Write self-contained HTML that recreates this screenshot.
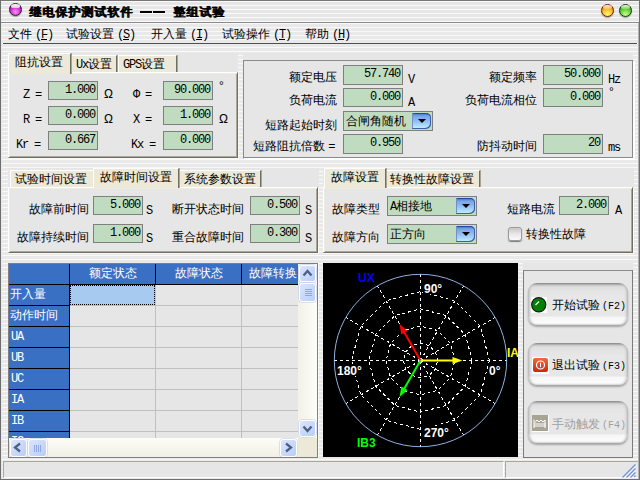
<!DOCTYPE html>
<html><head><meta charset="utf-8">
<style>
*{margin:0;padding:0;box-sizing:border-box}
html,body{width:640px;height:480px;overflow:hidden}
body{position:relative;font-family:"Liberation Sans",sans-serif;font-size:12px;color:#000;
background:repeating-linear-gradient(to bottom,#e9e9e9 0 3px,#f9f9f9 3px 4px);}
.a{position:absolute;white-space:nowrap}
.t{position:absolute;white-space:nowrap;line-height:12px;font-size:12px}
.m{font-family:"Liberation Mono",monospace;letter-spacing:-1.2px}
.inp{position:absolute;background:#c0dcc0;border:1px solid #7f7f7f;text-align:right;padding-right:2px;
 font-family:"Liberation Mono",monospace;letter-spacing:-1.2px;font-size:12px;line-height:17px}
.panel{position:absolute;background:#e6e6e6;border-top:1px solid #fff;border-left:1px solid #fff;border-right:1px solid #716f64;border-bottom:1px solid #716f64;box-shadow:inset 1px 1px 0 #eeecdf,inset -1px -1px 0 #aca899,1px 1px 0 #f8f8f8}
.tab{position:absolute;background:#ece9d8;border-top:1px solid #fff;border-left:1px solid #fff;border-right:1px solid #716f64;box-shadow:1px 0 0 #a9a595}
.tabs{position:absolute;background:#e6e6e6}
.grp{position:absolute;background:#e6e6e6;border:1px solid #8a8a8a;border-right-color:#fff;border-bottom-color:#fff;box-shadow:inset -1px -1px 0 #8a8a8a, 1px 1px 0 #fff}
.sb{position:absolute;border:1px solid #fff;border-radius:3px;background:linear-gradient(to bottom right,#dbe6fd,#b9cdf8);box-shadow:0 0 0 0.5px #b8c8e8}
.arr{position:absolute;left:50%;top:50%;width:6px;height:6px;border:2px solid #4d6185;border-width:2px 2px 0 0}
.arr.up{transform:translate(-50%,-25%) rotate(-45deg)}
.arr.dn{transform:translate(-50%,-75%) rotate(135deg)}
.arr.lf{transform:translate(-25%,-50%) rotate(-135deg)}
.arr.rt{transform:translate(-75%,-50%) rotate(45deg)}
.grip.v{position:absolute;left:5px;top:5px;width:7px;height:8px;background:repeating-linear-gradient(to bottom,#8fa8e0 0 1px,transparent 1px 2px)}
.grip.h{position:absolute;left:5px;top:5px;width:8px;height:7px;background:repeating-linear-gradient(to right,#8fa8e0 0 1px,transparent 1px 2px)}
.btn{position:absolute;border-radius:9px;background:linear-gradient(to bottom,#8a8a8a 0,#9a9a9a 1px,#c4c4c4 2px,#dedede 4px,#e6e6e6 9px,#e4e4e4 11px,#e7e7e7 12px,#e7e7e7 33px,#f6f6f6 34px,#fbfbfb 40px,#d8d8d8 42px);box-shadow:inset 3px 0 3px -2px #a8a8a8,inset -3px 0 3px -2px #a8a8a8,0 2px 2px #a4a4a4}
.cb{position:absolute;width:19px;height:16px;border-radius:1px 5px 5px 1px;background:linear-gradient(to bottom,#3d6cc0 0,#7aa6e8 20%,#8ab8f0 45%,#b0dcff 80%,#c8f0ff 100%);box-shadow:inset -1px -1px 0 #3a5fa8, inset 1px 0 0 #7090c8, inset 0 1px 0 #204a9a}
.cb:after{content:"";position:absolute;left:6px;top:6px;border-left:4px solid transparent;border-right:4px solid transparent;border-top:4px solid #000}
.u{font-family:"Liberation Mono",monospace;font-size:10px;letter-spacing:0}
</style></head><body>
<!-- window frame -->
<div class="a" style="left:0;top:0;width:1px;height:480px;background:#6e6e6e"></div>
<div class="a" style="left:639px;top:0;width:1px;height:480px;background:#6e6e6e"></div>
<div class="a" style="left:638px;top:0;width:1px;height:480px;background:#b4b4b4"></div>
<div class="a" style="left:0;top:479px;width:640px;height:1px;background:#6e6e6e"></div>
<div class="a" style="left:1px;top:0;width:1px;height:479px;background:#e8e8e8"></div>

<!-- title bar -->
<div class="a" style="left:0;top:0;width:640px;height:23px;border-top:1px solid #777;border-bottom:1px solid #8a8a8a;
 background:repeating-linear-gradient(to bottom,#fafafa 0 1px,#e6e6e6 1px 4px);"></div>
<div class="a" style="left:0;top:0;width:1px;height:23px;background:#6e6e6e"></div>
<div class="a" style="left:639px;top:0;width:1px;height:23px;background:#6e6e6e"></div>
<div class="a" style="left:9px;top:3px;width:13px;height:13px;border-radius:50%;background:radial-gradient(circle at 50% 72%,#f890f8 0,#d030d0 50%,#800080 85%);border:1px solid #222;box-shadow:0 1px 1px rgba(0,0,0,.3)"></div>
<div class="a" style="left:11px;top:4px;width:9px;height:4px;border-radius:50% 50% 40% 40%;background:linear-gradient(#fff,#e0c0e0)"></div>
<div class="t" style="left:29px;top:6px;font-weight:bold;letter-spacing:1px;text-shadow:0.6px 0 0 #000">继电保护测试软件</div>
<div class="a" style="left:140px;top:11px;width:12px;height:2px;background:#000"></div>
<div class="a" style="left:153px;top:11px;width:12px;height:2px;background:#000"></div>
<div class="t" style="left:173px;top:6px;font-weight:bold;letter-spacing:1px;text-shadow:0.6px 0 0 #000">整组试验</div>
<div class="a" style="left:601px;top:4px;width:13px;height:13px;border-radius:50%;background:radial-gradient(circle at 50% 85%,#ffff70 0,#f8c030 45%,#e07800 80%,#a03000 100%);border:1px solid #702000;box-shadow:0 1px 1px rgba(0,0,0,.35)"></div>
<div class="a" style="left:603px;top:5px;width:9px;height:4px;border-radius:50% 50% 40% 40%;background:linear-gradient(rgba(255,255,255,.95),rgba(255,230,200,.3))"></div>
<div class="a" style="left:619px;top:4px;width:13px;height:13px;border-radius:50%;background:radial-gradient(circle at 50% 85%,#c8ff90 0,#70d040 45%,#30a010 80%,#105000 100%);border:1px solid #0c3a0c;box-shadow:0 1px 1px rgba(0,0,0,.35)"></div>
<div class="a" style="left:621px;top:5px;width:9px;height:4px;border-radius:50% 50% 40% 40%;background:linear-gradient(rgba(255,255,255,.95),rgba(220,255,200,.3))"></div>

<!-- menu -->
<div class="a" style="left:3px;top:43px;width:634px;height:1px;background:#505050"></div>
<div class="t" style="left:8px;top:28px">文件<span class="m" style="margin-left:3px">(<u>F</u>)</span></div>
<div class="t" style="left:66px;top:28px">试验设置<span class="m" style="margin-left:3px">(<u>S</u>)</span></div>
<div class="t" style="left:151px;top:28px">开入量<span class="m" style="margin-left:3px">(<u>I</u>)</span></div>
<div class="t" style="left:222px;top:28px">试验操作<span class="m" style="margin-left:3px">(<u>T</u>)</span></div>
<div class="t" style="left:305px;top:28px">帮助<span class="m" style="margin-left:3px">(<u>H</u>)</span></div>


<!-- ===== tab control 1 (阻抗设置) ===== -->
<div class="tabs" style="left:8px;top:53px;width:230px;height:20px"></div>
<div class="panel" style="left:8px;top:72px;width:230px;height:86px"></div>
<div class="tab" style="left:8px;top:53px;width:63px;height:21px;border-bottom:none"></div>
<div class="tab" style="left:72px;top:55px;width:45px;height:17px;border-left:none"></div>
<div class="tab" style="left:118px;top:55px;width:59px;height:17px;border-left:1px solid #fff"></div>
<div class="t" style="left:15px;top:56px">阻抗设置</div>
<div class="t" style="left:76px;top:58px"><span class="m">Ux</span>设置</div>
<div class="t" style="left:123px;top:58px"><span class="m">GPS</span>设置</div>
<div class="t m" style="left:23px;top:89px">Z =</div>
<div class="t m" style="left:23px;top:114px">R =</div>
<div class="t m" style="left:16px;top:139px">Kr =</div>
<div class="inp" style="left:48px;top:81px;width:50px;height:19px">1.000</div>
<div class="inp" style="left:48px;top:106px;width:50px;height:19px">0.000</div>
<div class="inp" style="left:48px;top:131px;width:50px;height:19px">0.667</div>
<div class="t" style="left:104px;top:88px">Ω</div>
<div class="t" style="left:104px;top:113px">Ω</div>
<div class="t m" style="left:133px;top:89px">Φ =</div>
<div class="t m" style="left:133px;top:114px">X =</div>
<div class="t m" style="left:131px;top:139px">Kx =</div>
<div class="inp" style="left:163px;top:81px;width:50px;height:19px">90.000</div>
<div class="inp" style="left:163px;top:106px;width:50px;height:19px">1.000</div>
<div class="inp" style="left:163px;top:131px;width:50px;height:19px">0.000</div>
<div class="t" style="left:219px;top:80px">°</div>
<div class="t" style="left:219px;top:113px">Ω</div>

<!-- ===== group box right top ===== -->
<div class="a" style="left:243px;top:53px;width:390px;height:105px;background:#e6e6e6"></div>
<div class="grp" style="left:243px;top:60px;width:391px;height:99px"></div>
<div class="t" style="left:289px;top:71px">额定电压</div>
<div class="inp" style="left:343px;top:65px;width:60px;height:20px">57.740</div>
<div class="t m" style="left:408px;top:74px">V</div>
<div class="t" style="left:289px;top:94px">负荷电流</div>
<div class="inp" style="left:343px;top:88px;width:60px;height:19px">0.000</div>
<div class="t m" style="left:408px;top:97px">A</div>
<div class="t" style="left:265px;top:119px">短路起始时刻</div>
<div class="a" style="left:343px;top:111px;width:90px;height:20px;background:#c0dcc0;border:1px solid #7f7f7f"></div>
<div class="t" style="left:346px;top:115px">合闸角随机</div>
<div class="t" style="left:253px;top:140px">短路阻抗倍数 <span class="m">=</span></div>
<div class="inp" style="left:343px;top:134px;width:60px;height:20px">0.950</div>
<div class="t" style="left:489px;top:71px">额定频率</div>
<div class="inp" style="left:543px;top:65px;width:60px;height:20px">50.000</div>
<div class="t m" style="left:608px;top:74px">Hz</div>
<div class="t" style="left:465px;top:94px">负荷电流相位</div>
<div class="inp" style="left:543px;top:88px;width:60px;height:19px">0.000</div>
<div class="t" style="left:609px;top:86px">°</div>
<div class="t" style="left:477px;top:140px">防抖动时间</div>
<div class="inp" style="left:543px;top:134px;width:60px;height:20px">20</div>
<div class="t m" style="left:608px;top:142px">ms</div>

<!-- ===== tab control 2 (time) ===== -->
<div class="tabs" style="left:8px;top:168px;width:311px;height:20px"></div>
<div class="panel" style="left:8px;top:187px;width:310px;height:66px"></div>
<div class="tab" style="left:10px;top:170px;width:83px;height:17px;border-right:none"></div>
<div class="tab" style="left:93px;top:168px;width:86px;height:20px;border-bottom:none"></div>
<div class="tab" style="left:180px;top:170px;width:81px;height:17px;border-left:none"></div>
<div class="t" style="left:15px;top:173px">试验时间设置</div>
<div class="t" style="left:100px;top:171px">故障时间设置</div>
<div class="t" style="left:184px;top:173px">系统参数设置</div>
<div class="t" style="left:29px;top:203px">故障前时间</div>
<div class="inp" style="left:93px;top:196px;width:50px;height:19px">5.000</div>
<div class="t m" style="left:146px;top:205px">S</div>
<div class="t" style="left:17px;top:231px">故障持续时间</div>
<div class="inp" style="left:93px;top:224px;width:50px;height:19px">1.000</div>
<div class="t m" style="left:146px;top:233px">S</div>
<div class="t" style="left:172px;top:203px">断开状态时间</div>
<div class="inp" style="left:250px;top:196px;width:50px;height:19px">0.500</div>
<div class="t m" style="left:305px;top:205px">S</div>
<div class="t" style="left:172px;top:231px">重合故障时间</div>
<div class="inp" style="left:250px;top:224px;width:50px;height:19px">0.300</div>
<div class="t m" style="left:305px;top:233px">S</div>

<!-- ===== tab control 3 (fault) ===== -->
<div class="tabs" style="left:323px;top:168px;width:311px;height:20px"></div>
<div class="panel" style="left:323px;top:187px;width:310px;height:66px"></div>
<div class="tab" style="left:324px;top:168px;width:62px;height:20px;border-bottom:none"></div>
<div class="tab" style="left:387px;top:170px;width:93px;height:17px;border-left:none"></div>
<div class="t" style="left:331px;top:171px">故障设置</div>
<div class="t" style="left:390px;top:173px">转换性故障设置</div>
<div class="t" style="left:332px;top:203px">故障类型</div>
<div class="a" style="left:387px;top:196px;width:90px;height:20px;background:#c0dcc0;border:1px solid #7f7f7f"></div>
<div class="t" style="left:390px;top:200px"><span class="m">A</span>相接地</div>
<div class="t" style="left:332px;top:231px">故障方向</div>
<div class="a" style="left:387px;top:224px;width:90px;height:20px;background:#c0dcc0;border:1px solid #7f7f7f"></div>
<div class="t" style="left:390px;top:228px">正方向</div>
<div class="t" style="left:507px;top:203px">短路电流</div>
<div class="inp" style="left:559px;top:196px;width:50px;height:19px">2.000</div>
<div class="t m" style="left:615px;top:205px">A</div>
<div class="a" style="left:508px;top:227px;width:14px;height:14px;border:1px solid #9a9a9a;border-radius:3px;background:linear-gradient(#c4c4c4,#e8e8e8 50%,#fafafa);box-shadow:0 1px 1px #7a7a7a, inset 0 0 1px #fff"></div>
<div class="t" style="left:526px;top:228px">转换性故障</div>


<div class="cb" style="left:412px;top:113px"></div>
<div class="cb" style="left:456px;top:198px"></div>
<div class="cb" style="left:456px;top:226px"></div>
<!-- ===== table ===== -->
<div class="a" style="left:8px;top:263px;width:310px;height:195px;background:#e6e6e6;border:1px solid #7f7f7f;box-shadow:1px 0 0 #fafafa;overflow:hidden">
 <div class="a" style="left:0;top:0;width:289px;height:20px;background:#3a70c4"></div>
 <div class="a" style="left:0;top:0;width:60px;height:180px;background:#3a70c4"></div>
 <div class="a" style="left:0;top:20px;width:289px;height:1px;background:#000"></div>

 <div class="a" style="left:0;top:41px;width:60px;height:1px;background:#000"></div>
 <div class="a" style="left:61px;top:41px;width:228px;height:1px;background:#c0c0c0"></div>
 <div class="a" style="left:0;top:62px;width:60px;height:1px;background:#000"></div>
 <div class="a" style="left:61px;top:62px;width:228px;height:1px;background:#c0c0c0"></div>
 <div class="a" style="left:0;top:83px;width:60px;height:1px;background:#000"></div>
 <div class="a" style="left:61px;top:83px;width:228px;height:1px;background:#c0c0c0"></div>
 <div class="a" style="left:0;top:104px;width:60px;height:1px;background:#000"></div>
 <div class="a" style="left:61px;top:104px;width:228px;height:1px;background:#c0c0c0"></div>
 <div class="a" style="left:0;top:125px;width:60px;height:1px;background:#000"></div>
 <div class="a" style="left:61px;top:125px;width:228px;height:1px;background:#c0c0c0"></div>
 <div class="a" style="left:0;top:146px;width:60px;height:1px;background:#000"></div>
 <div class="a" style="left:61px;top:146px;width:228px;height:1px;background:#c0c0c0"></div>
 <div class="a" style="left:0;top:167px;width:60px;height:1px;background:#000"></div>
 <div class="a" style="left:61px;top:167px;width:228px;height:1px;background:#c0c0c0"></div>
 <div class="a" style="left:60px;top:0;width:1px;height:180px;background:#000"></div>
 <div class="a" style="left:146px;top:0;width:1px;height:20px;background:#000"></div>
 <div class="a" style="left:146px;top:21px;width:1px;height:160px;background:#c0c0c0"></div>
 <div class="a" style="left:232px;top:0;width:1px;height:20px;background:#000"></div>
 <div class="a" style="left:232px;top:21px;width:1px;height:160px;background:#c0c0c0"></div>
 <div class="a" style="left:61px;top:21px;width:85px;height:20px;background:#a6caf0;border:1px dotted #000"></div>
 <div class="t" style="left:80px;top:3px;color:#fff">额定状态</div>
 <div class="t" style="left:166px;top:3px;color:#fff">故障状态</div>
 <div class="t" style="left:240px;top:3px;color:#fff">故障转换</div>
 <div class="t" style="left:1px;top:24px;color:#fff">开入量</div>
 <div class="t" style="left:1px;top:45px;color:#fff">动作时间</div>
 <div class="t m" style="left:2px;top:67px;color:#fff">UA</div>
 <div class="t m" style="left:2px;top:88px;color:#fff">UB</div>
 <div class="t m" style="left:2px;top:109px;color:#fff">UC</div>
 <div class="t m" style="left:2px;top:130px;color:#fff">IA</div>
 <div class="t m" style="left:2px;top:151px;color:#fff">IB</div>
 <div class="t m" style="left:2px;top:172px;color:#fff">IC</div>

 <div class="a" style="left:289px;top:0;width:19px;height:174px;background:linear-gradient(to right,#f3f1e7,#fdfdf8)"></div>
 <div class="a" style="left:0;top:174px;width:289px;height:20px;background:linear-gradient(to bottom,#fdfdf8,#f1efe3)"></div>
 <div class="a" style="left:289px;top:174px;width:19px;height:19px;background:#ece9d8"></div>
 <div class="sb" style="left:290px;top:1px;width:17px;height:17px"></div>
 <div class="sb" style="left:290px;top:19px;width:17px;height:19px"><div class="grip v"></div></div>
 <div class="sb" style="left:290px;top:156px;width:17px;height:17px"></div>
 <div class="sb" style="left:1px;top:175px;width:17px;height:18px"></div>
 <div class="sb" style="left:19px;top:175px;width:19px;height:18px"><div class="grip h"></div></div>
 <div class="sb" style="left:271px;top:175px;width:17px;height:18px"></div>
</div>


<svg class="a" style="left:0;top:0" width="640" height="480">
 <g fill="none" stroke="#4d6185" stroke-width="2.3" stroke-linejoin="miter">
  <path d="M303.5 275.5 L307.5 271 L311.5 275.5"/>
  <path d="M303.5 426.5 L307.5 431 L311.5 426.5"/>
  <path d="M20 443.5 L15 447.5 L20 451.5"/>
  <path d="M286 443.5 L291 447.5 L286 451.5"/>
 </g>
</svg>
<!-- ===== polar plot ===== -->
<svg class="a" style="left:323px;top:263px" width="195" height="194" viewBox="323 263 195 194">
 <rect x="323" y="263" width="195" height="194" fill="#000"/>
 <g fill="none" stroke="#fff" stroke-width="1" stroke-dasharray="3 3" shape-rendering="crispEdges">
  <polygon points="437.7,360.5 435.4,351.9 429.1,345.6 420.5,343.3 411.9,345.6 405.6,351.9 403.3,360.5 405.6,369.1 411.9,375.4 420.5,377.7 429.1,375.4 435.4,369.1"/><polygon points="455.0,360.5 450.4,343.3 437.7,330.6 420.5,326.0 403.3,330.6 390.6,343.3 386.0,360.5 390.6,377.7 403.3,390.4 420.5,395.0 437.7,390.4 450.4,377.7"/><polygon points="472.2,360.5 465.3,334.6 446.4,315.7 420.5,308.8 394.6,315.7 375.7,334.6 368.8,360.5 375.7,386.4 394.6,405.3 420.5,412.2 446.4,405.3 465.3,386.4"/><polygon points="489.5,360.5 480.2,326.0 455.0,300.8 420.5,291.5 386.0,300.8 360.8,326.0 351.5,360.5 360.8,395.0 386.0,420.2 420.5,429.5 455.0,420.2 480.2,395.0"/>
  <path d="M420.5 360.5 L506.7 360.5"/><path d="M420.5 360.5 L495.2 317.4"/><path d="M420.5 360.5 L463.6 285.8"/><path d="M420.5 360.5 L420.5 274.3"/><path d="M420.5 360.5 L377.4 285.8"/><path d="M420.5 360.5 L345.8 317.4"/><path d="M420.5 360.5 L334.3 360.5"/><path d="M420.5 360.5 L345.8 403.6"/><path d="M420.5 360.5 L377.4 435.2"/><path d="M420.5 360.5 L420.5 446.7"/><path d="M420.5 360.5 L463.6 435.2"/><path d="M420.5 360.5 L495.2 403.6"/>
 </g>
 <circle cx="420.5" cy="360.5" r="86.2" fill="none" stroke="#8eb0e0" stroke-width="1"/>
 <path d="M420.5 360.5 L453.5 360.5" stroke="#ffff00" stroke-width="2"/><path d="M462.5 360.5 L452.5 364.1 L452.5 356.9 Z" fill="#ffff00"/><path d="M420.5 360.5 L404.0 331.9" stroke="#ff0000" stroke-width="2"/><path d="M399.5 324.1 L407.6 331.0 L401.4 334.6 Z" fill="#ff0000"/><path d="M420.5 360.5 L404.0 389.1" stroke="#00ff00" stroke-width="2"/><path d="M399.5 396.9 L401.4 386.4 L407.6 390.0 Z" fill="#00ff00"/>
 <g fill="#000">
  <rect x="357" y="271" width="20" height="12"/>
  <rect x="507" y="346" width="11" height="12"/>
  <rect x="356" y="436" width="22" height="12"/>
  <rect x="423" y="282" width="22" height="12"/>
  <rect x="336" y="364" width="28" height="12"/>
  <rect x="488" y="364" width="15" height="12"/>
  <rect x="423" y="426" width="28" height="12"/>
 </g>
 <g font-family="Liberation Sans" font-weight="bold" font-size="12">
  <text x="358" y="282" fill="#0000ff">UX</text>
  <text x="507" y="357" fill="#ffff00">IA</text>
  <text x="357" y="447" fill="#00ff00">IB3</text>
  <text x="424" y="293" fill="#fff">90°</text>
  <text x="337" y="375" fill="#fff">180°</text>
  <text x="489" y="375" fill="#fff">0°</text>
  <text x="424" y="437" fill="#fff">270°</text>
 </g>
</svg>

<!-- ===== button panel ===== -->
<div class="a" style="left:523px;top:263px;width:110px;height:195px;background:#e6e6e6"></div>
<div class="a" style="left:523px;top:270px;width:110px;height:188px;border:1px solid #7a7a7a;border-top-color:#8a8a8a"></div>
<div class="btn" style="left:528px;top:283px;width:100px;height:42px"></div>
<div class="btn" style="left:528px;top:343px;width:100px;height:42px"></div>
<div class="btn" style="left:528px;top:401px;width:100px;height:42px"></div>
<svg class="a" style="left:531px;top:297px" width="16" height="16" viewBox="0 0 16 16">
 <rect x="0" y="0" width="16" height="16" fill="#fff"/>
 <circle cx="7.75" cy="7.75" r="7.1" fill="#008000" stroke="#101010" stroke-width="1.1"/>
 <path d="M4.5 8 L8 4.5" stroke="#f0f0f0" stroke-width="1.2"/>
</svg>
<div class="t" style="left:552px;top:299px">开始试验<span style="font-family:'Liberation Mono',monospace;font-size:10px;margin-left:2px">(F2)</span></div>
<svg class="a" style="left:532px;top:357px" width="17" height="17" viewBox="0 0 17 17">
 <rect x="0" y="0" width="17" height="17" fill="#fff"/>
 <rect x="1" y="1" width="15" height="14" rx="2" fill="url(#rg)"/>
 <defs><linearGradient id="rg" x1="0" y1="0" x2="0" y2="1"><stop offset="0" stop-color="#f06a3c"/><stop offset="1" stop-color="#c82a08"/></linearGradient></defs>
 <circle cx="8.5" cy="8" r="4" fill="none" stroke="#fff" stroke-width="1.2"/>
 <path d="M8.5 5.8 L8.5 10.2" stroke="#fff" stroke-width="1"/>
</svg>
<div class="t" style="left:552px;top:359px">退出试验<span style="font-family:'Liberation Mono',monospace;font-size:10px;margin-left:2px">(F3)</span></div>
<svg class="a" style="left:532px;top:415px" width="17" height="17" viewBox="0 0 17 17">
 <rect x="0" y="0" width="17" height="17" fill="#fff"/>
 <rect x="0" y="0" width="16" height="16" fill="#a8a494"/>
 <path d="M2 4.5 L2 13 M2 9 L14 9 M2 11 L14 11 M3 7.5 L5 5 L7 7 L9 5 L11 7 L13 5 L13 13" stroke="#fff" stroke-width="1" fill="none"/>
</svg>
<div class="t" style="left:552px;top:418px;color:#a0a0a0">手动触发<span style="font-family:'Liberation Mono',monospace;font-size:10px;margin-left:2px">(F4)</span></div>

<!-- ===== status bar ===== -->
<div class="a" style="left:3px;top:461px;width:501px;height:17px;border-top:1px solid #aca899;border-left:1px solid #aca899;border-right:1px solid #fff;border-bottom:1px solid #fff;background:#e6e6e6"></div>
<div class="a" style="left:505px;top:461px;width:133px;height:17px;border-top:1px solid #aca899;border-left:1px solid #aca899;border-bottom:1px solid #fff;background:#e6e6e6"></div>
<svg class="a" style="left:620px;top:462px" width="18" height="17">
 <g stroke="#fdfbf0" stroke-width="1">
  <path d="M3.5 16.5 L16.5 3.5"/><path d="M7.5 16.5 L16.5 7.5"/><path d="M11.5 16.5 L16.5 11.5"/>
 </g>
 <g stroke="#6f92dc" stroke-width="1.3">
  <path d="M2.5 15.5 L15.5 2.5"/><path d="M6.5 15.5 L15.5 6.5"/><path d="M10.5 15.5 L15.5 10.5"/><path d="M14 15 L15.5 13.5"/>
 </g>
</svg>

</body></html>
